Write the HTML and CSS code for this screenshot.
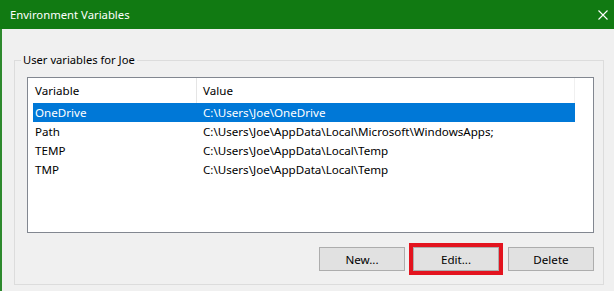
FILE: index.html
```html
<!DOCTYPE html>
<html lang="en">
<head>
    <meta charset="UTF-8">
    <meta name="viewport" content="width=device-width, initial-scale=1.0">
    <title>Environment Variables</title>
    <link rel="stylesheet" href="styles.css">
</head>
<body>
    <div class="titlebar">
        <span class="title">Environment Variables</span>
        <svg class="close" width="10" height="10" viewBox="0 0 10 10">
            <path d="M0.5 0.5 L9.5 9.5 M9.5 0.5 L0.5 9.5" stroke="#fff" stroke-width="1.1" fill="none"/>
        </svg>
    </div>

    <div class="dialog">
        <fieldset class="group">
            <legend>User variables for Joe</legend>

            <div class="listview">
                <div class="lv-row lv-head">
                    <div class="cell">Variable</div>
                    <div class="cell">Value</div>
                </div>
                <div class="lv-row selected">
                    <div class="cell">OneDrive</div>
                    <div class="cell">C:\Users\Joe\OneDrive</div>
                </div>
                <div class="lv-row">
                    <div class="cell">Path</div>
                    <div class="cell">C:\Users\Joe\AppData\Local\Microsoft\WindowsApps;</div>
                </div>
                <div class="lv-row">
                    <div class="cell">TEMP</div>
                    <div class="cell">C:\Users\Joe\AppData\Local\Temp</div>
                </div>
                <div class="lv-row">
                    <div class="cell">TMP</div>
                    <div class="cell">C:\Users\Joe\AppData\Local\Temp</div>
                </div>
            </div>

            <div class="buttons">
                <button class="btn">New...</button>
                <button class="btn marked">Edit...</button>
                <button class="btn">Delete</button>
            </div>
        </fieldset>
    </div>
</body>
</html>
```

FILE: styles.css
```css
*{
    padding: 0;
    margin: 0;
    box-sizing: border-box;
}
body{
    width: 614px;
    height: 291px;
    overflow: hidden;
    background-color: #f0f0f0;
    font-family: "Segoe UI", "Noto Sans", "Liberation Sans", sans-serif;
    font-size: 11.6px;
    color: #000;
}
/* 标题栏 */
.titlebar{
    height: 29px;
    background-color: #117a12;
    color: #fff;
    display: flex;
    align-items: center;
    justify-content: space-between;
    padding: 0 6px 0 10px;
}
.title{
    font-size: 11.3px;
}
.close{
    display: block;
}
/* 窗口主体 */
.dialog{
    height: 262px;
    border-left: 2px solid #2e8a2e;
    padding: 24px 10px 0 12px;
}
.group{
    border: 1px solid #dcdcdc;
    padding: 10px 9px 13px 12px;
}
.group legend{
    font-size: 11.2px;
    line-height: 14px;
    padding: 0 2px;
    margin-left: -6px;
}
/* 列表 */
.listview{
    height: 156px;
    background-color: #fff;
    border: 1px solid #828790;
}
.lv-row{
    display: grid;
    grid-template-columns: 164px 378px;
    margin-left: 5px;
    width: 542px;
    height: 19px;
    line-height: 19px;
    white-space: nowrap;
}
.lv-row .cell:first-child{
    padding-left: 2px;
}
.lv-row .cell:last-child{
    padding-left: 6px;
}
.lv-head{
    height: 25px;
    line-height: 25px;
}
.lv-head .cell:first-child{
    border-right: 1px solid #e5e5e5;
}
.lv-head .cell:last-child{
    border-right: 1px solid #f0f0f0;
}
.selected{
    background-color: #0078d7;
    color: #fff;
}
/* 按钮 */
.buttons{
    display: flex;
    justify-content: flex-end;
    gap: 8px;
    margin-top: 14px;
}
.btn{
    width: 86px;
    height: 24px;
    background-color: #e1e1e1;
    border: 1px solid #adadad;
    font-family: inherit;
    font-size: 11.6px;
    color: #000;
}
.btn:nth-child(2){
    margin-right: 1px;
}
.marked{
    outline: 4px solid #e3141f;
}
```
